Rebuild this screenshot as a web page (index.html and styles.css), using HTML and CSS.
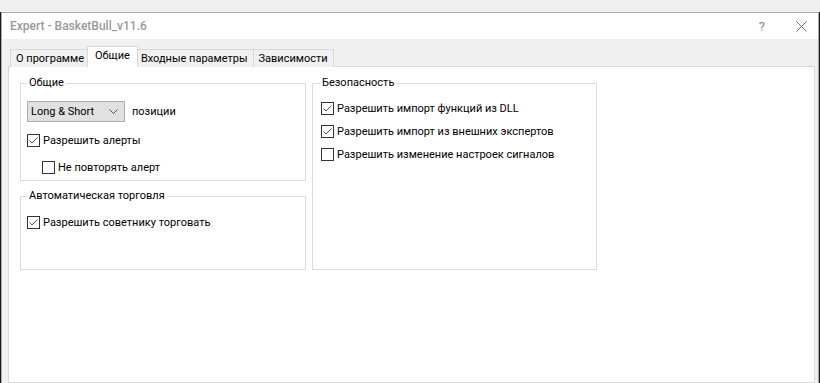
FILE: index.html
```html
<!DOCTYPE html>
<html lang="ru">
<head>
  <meta charset="UTF-8" />
  <title>Expert - BasketBull_v11.6</title>
  <link rel="stylesheet" href="styles.css">
</head>
<body>

  <div class="desk-top"></div>

  <div class="window">
    <!-- Titlebar -->
    <div class="titlebar">
      <span class="title">Expert - BasketBull_v11.6</span>
      <span class="help">?</span>
      <svg class="close" width="11" height="11" viewBox="0 0 11 11">
        <path d="M0.5 0.5 L10.5 10.5 M10.5 0.5 L0.5 10.5" stroke="#6f6f6f" stroke-width="1" fill="none"/>
      </svg>
    </div>

    <div class="dialog">
      <!-- Tabs -->
      <div class="tabs">
        <div class="tab">О программе</div>
        <div class="tab active">Общие</div>
        <div class="tab">Входные параметры</div>
        <div class="tab">Зависимости</div>
      </div>

      <div class="panel">
        <div class="columns">
          <div class="col">
            <fieldset class="group group-common">
              <legend>Общие</legend>
              <div class="row">
                <div class="select">
                  <span>Long &amp; Short</span>
                  <svg width="9" height="6" viewBox="0 0 9 6"><path d="M0.5 0.5 L4.5 4.5 L8.5 0.5" stroke="#555" fill="none"/></svg>
                </div>
                <span class="caption">позиции</span>
              </div>
              <div class="check first">
                <svg class="box" width="13" height="13" viewBox="0 0 13 13"><rect x="0.5" y="0.5" width="12" height="12" fill="#fff" stroke="#333"/><path d="M2.5 6.5 L5 9 L10.5 3.5" stroke="#555" fill="none"/></svg>
                <span>Разрешить алерты</span>
              </div>
              <div class="check sub">
                <svg class="box" width="13" height="13" viewBox="0 0 13 13"><rect x="0.5" y="0.5" width="12" height="12" fill="#fff" stroke="#333"/></svg>
                <span>Не повторять алерт</span>
              </div>
            </fieldset>

            <fieldset class="group group-auto">
              <legend>Автоматическая торговля</legend>
              <div class="check">
                <svg class="box" width="13" height="13" viewBox="0 0 13 13"><rect x="0.5" y="0.5" width="12" height="12" fill="#fff" stroke="#333"/><path d="M2.5 6.5 L5 9 L10.5 3.5" stroke="#555" fill="none"/></svg>
                <span>Разрешить советнику торговать</span>
              </div>
            </fieldset>
          </div>

          <fieldset class="group group-safe">
            <legend>Безопасность</legend>
            <div class="check">
              <svg class="box" width="13" height="13" viewBox="0 0 13 13"><rect x="0.5" y="0.5" width="12" height="12" fill="#fff" stroke="#333"/><path d="M2.5 6.5 L5 9 L10.5 3.5" stroke="#555" fill="none"/></svg>
              <span>Разрешить импорт функций из DLL</span>
            </div>
            <div class="check">
              <svg class="box" width="13" height="13" viewBox="0 0 13 13"><rect x="0.5" y="0.5" width="12" height="12" fill="#fff" stroke="#333"/><path d="M2.5 6.5 L5 9 L10.5 3.5" stroke="#555" fill="none"/></svg>
              <span>Разрешить импорт из внешних экспертов</span>
            </div>
            <div class="check">
              <svg class="box" width="13" height="13" viewBox="0 0 13 13"><rect x="0.5" y="0.5" width="12" height="12" fill="#fff" stroke="#333"/></svg>
              <span>Разрешить изменение настроек сигналов</span>
            </div>
          </fieldset>
        </div>
      </div>
    </div>
  </div>

</body>
</html>
```

FILE: styles.css
```css
body {
  margin: 0; padding: 0;
  font-family: Roboto, 'Liberation Sans', sans-serif;
  font-size: 11px;
  color: #000;
  background-color: #1b1b1b;
  height: 383px;
  overflow: hidden;
}

.desk-top {
  height: 12px;
  background: #f0f0f0;
}

/* --- Window --- */
.window {
  margin: 0 1px;
  border: 1px solid #a9a9a9;
  border-bottom: none;
  background: #f0f0f0;
  height: 370px;
  display: flex;
  flex-direction: column;
}
.titlebar {
  height: 26px;
  background: #fff;
  display: flex;
  align-items: center;
  padding-left: 8px;
}
.title {
  color: #999;
  font-size: 12px;
  font-weight: 500;
  flex: 1;
}
.help {
  color: #8a8a8a;
  font-size: 13px;
  margin-right: 31px;
}
.close {
  margin-right: 11px;
}

.dialog {
  flex: 1;
  display: flex;
  flex-direction: column;
  padding: 8px 3px 0 6px;
}

/* --- Tabs --- */
.tabs {
  display: flex;
  align-items: flex-end;
  height: 20px;
  padding-left: 2px;
  margin-bottom: -1px;
}
.tab {
  height: 17px;
  line-height: 18px;
  padding: 0 5px;
  border: 1px solid #d9d9d9;
  border-bottom: none;
  margin-left: -1px;
  background: #f0f0f0;
  position: relative;
}
.tab:first-child { margin-left: 0; }
.tab.active {
  height: 20px;
  line-height: 17px;
  background: #fff;
  margin: 0 -2px 0 -3px;
  padding: 0 7px;
  z-index: 1;
}

.panel {
  flex: 1;
  background: #fff;
  border: 1px solid #d9d9d9;
  padding: 9px 0 0 11px;
}

/* --- Group boxes --- */
.columns {
  display: flex;
  gap: 6px;
  align-items: stretch;
}
.col {
  display: flex;
  flex-direction: column;
  gap: 8px;
}
.group {
  width: 286px;
  box-sizing: border-box;
  margin: 0;
  border: 1px solid #dcdcdc;
  padding: 0 6px;
  min-width: 0;
}
.group legend {
  padding: 0 2px;
  line-height: 14px;
}
.group-common { padding-top: 11px; padding-bottom: 6px; }
.group-auto { padding-top: 13px; padding-bottom: 40px; }
.group-safe { width: 285px; padding: 12px 9px 0 8px; }
.group-safe legend { margin-left: -1px; }

.row {
  display: flex;
  align-items: center;
  gap: 7px;
}
.select {
  width: 98px;
  height: 21px;
  box-sizing: border-box;
  background: #e1e1e1;
  border: 1px solid #adadad;
  display: flex;
  align-items: center;
  justify-content: space-between;
  padding: 0 6px 0 3px;
}

.check {
  display: flex;
  align-items: center;
  gap: 3px;
  height: 13px;
}
.check .box { flex: none; }
.check.first { margin-top: 12px; }
.check.sub { margin-top: 14px; margin-left: 15px; }
.group-safe .check + .check { margin-top: 10px; }
```
